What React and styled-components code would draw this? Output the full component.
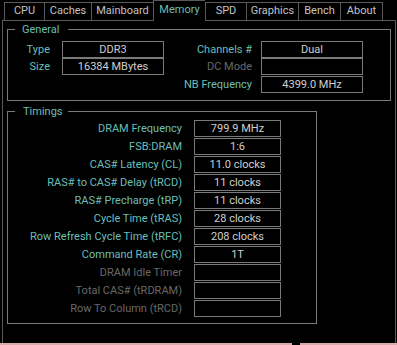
import React from 'react'
import styled, {createGlobalStyle} from 'styled-components'

const TEAL = '#6bbfb8'
const DIM = '#686868'
const VALUE = '#cfcfcf'
const LINE = '#7a7a7a'
const TABLINE = '#5a5a5a'

const tabs = [
  {name: 'CPU', w: 40},
  {name: 'Caches', w: 47},
  {name: 'Mainboard', w: 62},
  {name: 'Memory', w: 52, active: true},
  {name: 'SPD', w: 41},
  {name: 'Graphics', w: 52},
  {name: 'Bench', w: 42},
  {name: 'About', w: 43, last: true}
]

const timings = [
  {label: 'DRAM Frequency', value: '799.9 MHz'},
  {label: 'FSB:DRAM', value: '1:6'},
  {label: 'CAS# Latency (CL)', value: '11.0 clocks'},
  {label: 'RAS# to CAS# Delay (tRCD)', value: '11 clocks'},
  {label: 'RAS# Precharge (tRP)', value: '11 clocks'},
  {label: 'Cycle Time (tRAS)', value: '28 clocks'},
  {label: 'Row Refresh Cycle Time (tRFC)', value: '208 clocks'},
  {label: 'Command Rate (CR)', value: '1T'},
  {label: 'DRAM Idle Timer', value: '', off: true},
  {label: 'Total CAS# (tRDRAM)', value: '', off: true},
  {label: 'Row To Column (tRCD)', value: '', off: true}
]

const App = () => {
  return (
    <Window>
      <GlobalStyle />
      <TabBar>
        {tabs.map((tab) => (
          <Tab key={tab.name} $w={tab.w} $active={tab.active} $last={tab.last}>
            {tab.name}
          </Tab>
        ))}
      </TabBar>
      <Panel>
        <GroupBox $w={384} $pad="5px 0 7px 0">
          <Legend $pl={7}>General</Legend>
          <GeneralGrid>
            <Label $pr={12}>Type</Label>
            <Value>DDR3</Value>
            <Label $pr={9}>Channels #</Label>
            <Value>Dual</Value>

            <Label $pr={12}>Size</Label>
            <Value>16384 MBytes</Value>
            <Label $pr={9} $off>DC Mode</Label>
            <Value />

            <span />
            <span />
            <Label $pr={9}>NB Frequency</Label>
            <Value>4399.0 MHz</Value>
          </GeneralGrid>
        </GroupBox>

        <GroupBox $w={310} $pad="2px 0 5px 0" $mt={4}>
          <Legend $pl={8}>Timings</Legend>
          <TimingGrid>
            {timings.map((row) => (
              <React.Fragment key={row.label}>
                <Label $pr={12} $off={row.off}>{row.label}</Label>
                <Value>{row.value}</Value>
              </React.Fragment>
            ))}
          </TimingGrid>
        </GroupBox>
      </Panel>
      <Footer>
        <Strip $w={292} />
        <Strip />
      </Footer>
    </Window>
  )
}

const GlobalStyle = createGlobalStyle`
  html, body {
    margin: 0;
    padding: 0;
    background: #000;
  }
  body {
    font-family: Roboto, "Liberation Sans", sans-serif;
    font-size: 11px;
    -webkit-font-smoothing: antialiased;
  }
`

const Window = styled.div`
  width: 397px;
  height: 345px;
  background: #000;
  overflow: hidden;
  display: flex;
  flex-direction: column;
`

const TabBar = styled.div`
  display: flex;
  align-items: flex-end;
  height: 20px;
  padding-left: 4px;
  position: relative;
  z-index: 1;
`

const Tab = styled.div`
  box-sizing: border-box;
  width: ${({$w}) => $w}px;
  height: ${({$active}) => ($active ? 21 : 18)}px;
  margin-bottom: ${({$active}) => ($active ? -1 : 0)}px;
  background: #000;
  border-top: 1px solid ${TABLINE};
  border-left: 1px solid ${TABLINE};
  border-right: ${({$last}) => ($last ? `1px solid ${TABLINE}` : 'none')};
  color: ${({$active}) => ($active ? TEAL : '#c2c2c2')};
  text-align: center;
  line-height: ${({$active}) => ($active ? 18 : 16)}px;
  white-space: nowrap;
`

const Panel = styled.div`
  box-sizing: border-box;
  margin-left: 2px;
  width: 394px;
  height: 323px;
  border: 1px solid ${TABLINE};
  border-bottom: none;
  padding: 2px 4px 0 4px;
`

const GroupBox = styled.fieldset`
  box-sizing: border-box;
  min-width: 0;
  width: ${({$w}) => $w}px;
  margin: ${({$mt}) => $mt || 0}px 0 0 0;
  padding: ${({$pad}) => $pad};
  border: 1px solid ${LINE};
`

const Legend = styled.legend`
  box-sizing: border-box;
  width: 53px;
  margin-left: 7px;
  padding: 0 0 0 ${({$pl}) => $pl}px;
  text-align: left;
  line-height: 13px;
  color: ${TEAL};
`

const GeneralGrid = styled.div`
  display: grid;
  grid-template-columns: 54px 102px 97px 102px;
  grid-template-rows: 17px 18px 17px;
  align-items: start;
`

const TimingGrid = styled.div`
  display: grid;
  grid-template-columns: 186px 87px;
  grid-auto-rows: 18px;
  align-items: start;
`

const Label = styled.div`
  box-sizing: border-box;
  padding-right: ${({$pr}) => $pr}px;
  text-align: right;
  line-height: 17px;
  white-space: nowrap;
  color: ${({$off}) => ($off ? DIM : TEAL)};
`

const Value = styled.div`
  box-sizing: border-box;
  height: 17px;
  border: 1px solid ${LINE};
  text-align: center;
  line-height: 15px;
  color: ${VALUE};
  white-space: nowrap;
`

const Footer = styled.div`
  display: flex;
  gap: 8px;
  height: 2px;
`

const Strip = styled.div`
  ${({$w}) => ($w ? `width: ${$w}px;` : 'flex: 1;')}
  background: #d8aaaa;
`

export default App
